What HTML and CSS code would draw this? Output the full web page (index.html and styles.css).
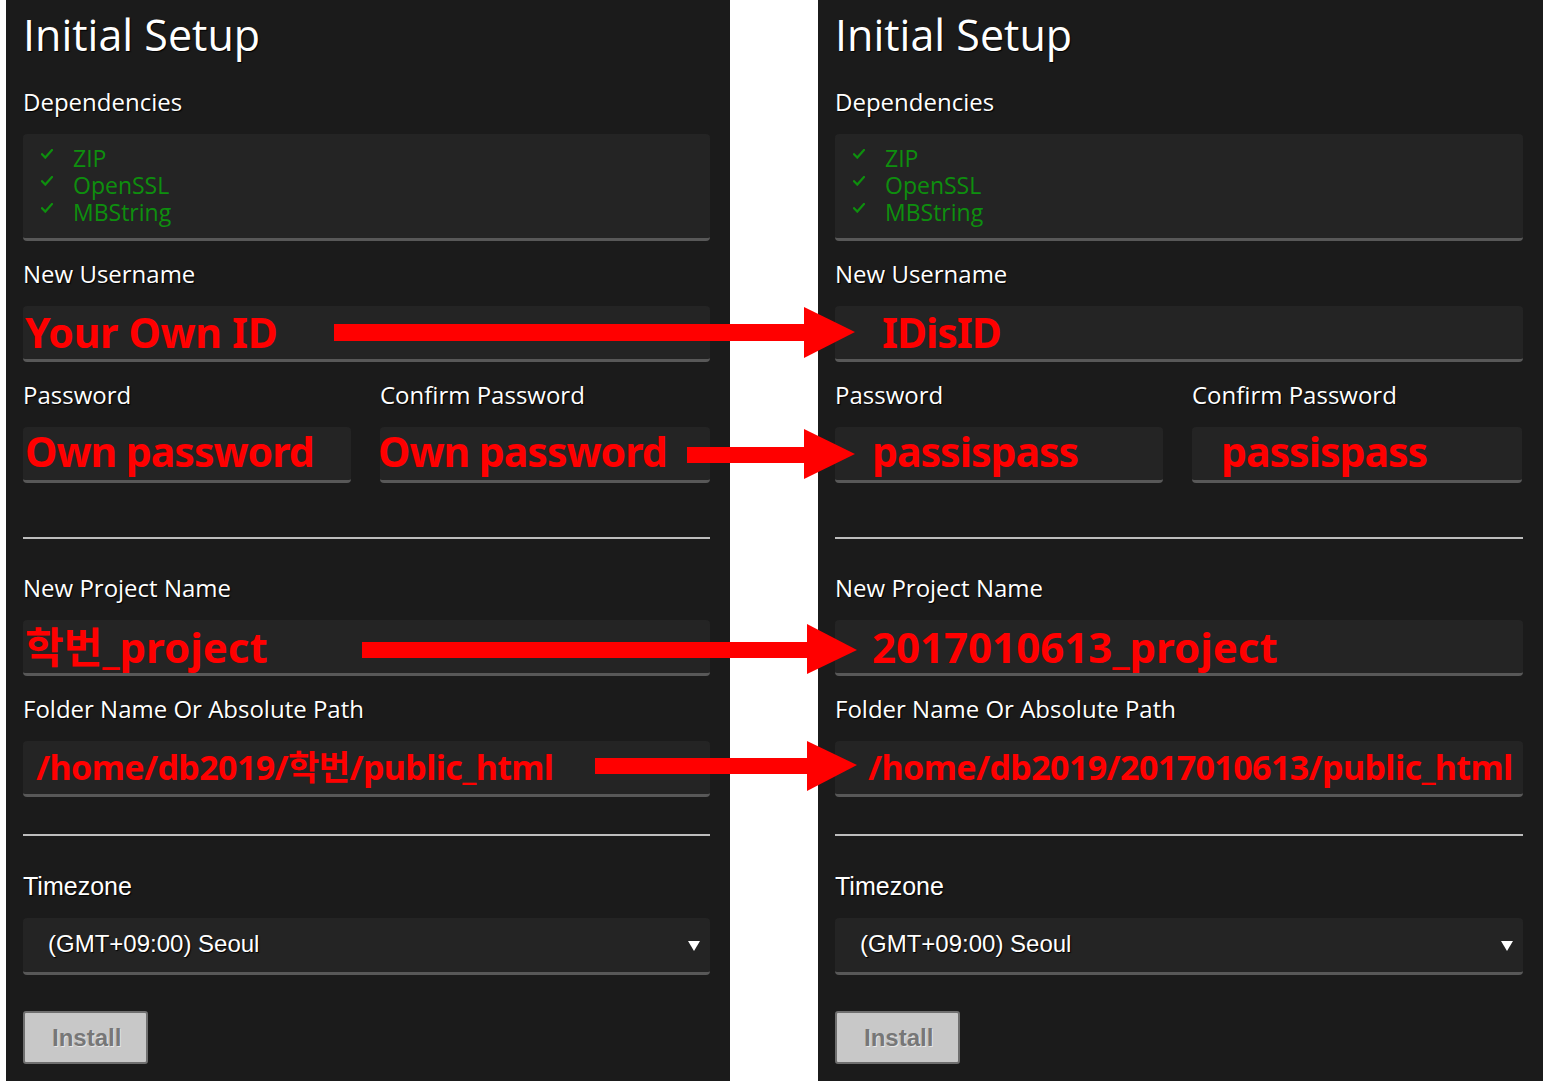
FILE: index.html
```html
<!DOCTYPE html>
<html lang="ko">
<head>
<meta charset="utf-8">
<title>Initial Setup</title>
<link rel="stylesheet" href="styles.css">
</head>
<body>
<div class="page">
  <section class="panel panel-left">
    <h1 class="title">Initial Setup</h1>
    <div class="label label-deps">Dependencies</div>
    <ul class="deps">
      <li><svg class="check" width="12" height="10" viewBox="0 0 12 10"><path d="M1 5.2 L4.3 8.6 L11 1" fill="none" stroke="#0e8f0e" stroke-width="2.2" stroke-linecap="square"/></svg><span class="dep">ZIP</span></li>
      <li><svg class="check" width="12" height="10" viewBox="0 0 12 10"><path d="M1 5.2 L4.3 8.6 L11 1" fill="none" stroke="#0e8f0e" stroke-width="2.2" stroke-linecap="square"/></svg><span class="dep">OpenSSL</span></li>
      <li><svg class="check" width="12" height="10" viewBox="0 0 12 10"><path d="M1 5.2 L4.3 8.6 L11 1" fill="none" stroke="#0e8f0e" stroke-width="2.2" stroke-linecap="square"/></svg><span class="dep">MBString</span></li>
    </ul>
    <div class="label label-gap">New Username</div>
    <div class="field"><span class="val tight-y pad-2">Your Own ID</span></div>
    <div class="pair">
      <div class="col">
        <div class="label label-gap">Password</div>
        <div class="field field-pw"><span class="val tight pad-2">Own password</span></div>
      </div>
      <div class="col">
        <div class="label label-gap">Confirm Password</div>
        <div class="field field-pw"><span class="val tight pad-neg">Own password</span></div>
      </div>
    </div>
    <div class="rule rule-a"></div>
    <div class="label label-after-rule">New Project Name</div>
    <div class="field"><span class="val big pad-2">학번_project</span></div>
    <div class="label label-gap">Folder Name Or Absolute Path</div>
    <div class="field"><span class="val path pad-13">/home/db2019/학번/public_html</span></div>
    <div class="rule rule-b"></div>
    <div class="label label-tz">Timezone</div>
    <div class="select"><span class="select-text">(GMT+09:00) Seoul</span><span class="caret"></span></div>
    <button class="btn" type="button">Install</button>
  </section>

  <section class="panel panel-right">
    <h1 class="title">Initial Setup</h1>
    <div class="label label-deps">Dependencies</div>
    <ul class="deps">
      <li><svg class="check" width="12" height="10" viewBox="0 0 12 10"><path d="M1 5.2 L4.3 8.6 L11 1" fill="none" stroke="#0e8f0e" stroke-width="2.2" stroke-linecap="square"/></svg><span class="dep">ZIP</span></li>
      <li><svg class="check" width="12" height="10" viewBox="0 0 12 10"><path d="M1 5.2 L4.3 8.6 L11 1" fill="none" stroke="#0e8f0e" stroke-width="2.2" stroke-linecap="square"/></svg><span class="dep">OpenSSL</span></li>
      <li><svg class="check" width="12" height="10" viewBox="0 0 12 10"><path d="M1 5.2 L4.3 8.6 L11 1" fill="none" stroke="#0e8f0e" stroke-width="2.2" stroke-linecap="square"/></svg><span class="dep">MBString</span></li>
    </ul>
    <div class="label label-gap">New Username</div>
    <div class="field"><span class="val tight pad-47">IDisID</span></div>
    <div class="pair">
      <div class="col">
        <div class="label label-gap">Password</div>
        <div class="field field-pw"><span class="val tight pad-37">passispass</span></div>
      </div>
      <div class="col">
        <div class="label label-gap">Confirm Password</div>
        <div class="field field-pw"><span class="val tight pad-29">passispass</span></div>
      </div>
    </div>
    <div class="rule rule-a"></div>
    <div class="label label-after-rule">New Project Name</div>
    <div class="field"><span class="val big pad-37">2017010613_project</span></div>
    <div class="label label-gap">Folder Name Or Absolute Path</div>
    <div class="field"><span class="val path pad-33">/home/db2019/2017010613/public_html</span></div>
    <div class="rule rule-b"></div>
    <div class="label label-tz">Timezone</div>
    <div class="select"><span class="select-text">(GMT+09:00) Seoul</span><span class="caret"></span></div>
    <button class="btn" type="button">Install</button>
  </section>
</div>

<svg class="arrows" width="1543" height="1081" viewBox="0 0 1543 1081" aria-hidden="true">
  <g fill="#ff0000">
    <rect x="334" y="324" width="472" height="17"/>
    <polygon points="804,307 855,332 804,358"/>
    <rect x="687" y="447" width="119" height="16"/>
    <polygon points="804,429 855,454 804,479"/>
    <rect x="362" y="642" width="447" height="16"/>
    <polygon points="807,624 857,650 807,674"/>
    <rect x="595" y="758" width="214" height="16"/>
    <polygon points="807,741 857,765 807,791"/>
  </g>
</svg>
</body>
</html>
```

FILE: styles.css
```css
html, body {
  margin: 0;
  padding: 0;
}

body {
  background: #ffffff;
  font-family: "Open Sans", "Noto Sans", sans-serif;
  position: relative;
  width: 1543px;
  height: 1081px;
  overflow: hidden;
}

.page {
  display: flex;
  gap: 88px;
  padding-left: 6px;
  height: 1081px;
}

.panel {
  box-sizing: border-box;
  background: #1b1b1b;
  padding: 0 20px 0 17px;
  display: flex;
  flex-direction: column;
  height: 1081px;
}

.panel-left { width: 724px; }
.panel-right { width: 725px; }

.title {
  margin: 0;
  height: 70px;
  line-height: 70px;
  font-size: 43px;
  font-weight: 500;
  color: #ffffff;
  text-shadow: 1px 1px 1px #000;
}

.label {
  height: 30px;
  line-height: 30px;
  font-size: 24px;
  font-weight: 500;
  color: #ffffff;
  text-shadow: 1px 1px 1px #000;
  margin-bottom: 17px;
  white-space: nowrap;
}

.label-deps { margin-top: 17px; }
.label-gap { margin-top: 18px; }
.label-after-rule { margin-top: 34px; }

.label-tz {
  margin-top: 35px;
  font-family: "Liberation Sans", Arial, sans-serif;
  font-size: 25px;
}

.deps {
  list-style: none;
  margin: 0;
  box-sizing: border-box;
  height: 107px;
  padding: 11px 0 0 18px;
  background: #242424;
  border-radius: 4px;
  border-bottom: 3px solid #585858;
}

.deps li {
  display: flex;
  align-items: flex-start;
  height: 27px;
  line-height: 27px;
  font-size: 23px;
  color: #0e8f0e;
}

.check {
  flex: none;
  margin-top: 4px;
  margin-right: 20px;
}

.field {
  box-sizing: border-box;
  height: 56px;
  background: #242424;
  border-radius: 4px;
  border-bottom: 3px solid #585858;
  display: flex;
  align-items: center;
  overflow: visible;
  white-space: nowrap;
}

.field-pw { padding-bottom: 4px; }

.val {
  color: #ff0000;
  font-family: "Noto Sans", "Noto Sans CJK KR", sans-serif;
  font-weight: 700;
  line-height: 53px;
}

.big { font-size: 42px; }
.tight { font-size: 41px; letter-spacing: -1px; }
.tight-y { font-size: 41px; letter-spacing: -0.3px; }
.path { font-size: 34px; letter-spacing: -0.6px; }

.pad-neg { margin-left: -2px; }
.pad-2 { padding-left: 2px; }
.pad-13 { padding-left: 13px; }
.pad-29 { padding-left: 29px; }
.pad-33 { padding-left: 33px; }
.pad-37 { padding-left: 37px; }
.pad-47 { padding-left: 47px; }

.pair {
  display: grid;
  grid-template-columns: 328px 330px;
  column-gap: 29px;
}

.rule {
  height: 2px;
  background: #bdbdbd;
}

.rule-a { margin-top: 54px; }
.rule-b { margin-top: 37px; }

.select {
  box-sizing: border-box;
  height: 57px;
  background: #242424;
  border-radius: 4px;
  border-bottom: 3px solid #585858;
  display: flex;
  align-items: center;
  padding: 0 10px 2px 25px;
  font-family: "Liberation Sans", Arial, sans-serif;
  font-size: 24px;
  color: #ffffff;
}

.select-text {
  flex: 1;
  text-shadow: 1px 1px 1px #000;
}

.caret {
  width: 0;
  height: 0;
  border-left: 6px solid transparent;
  border-right: 6px solid transparent;
  border-top: 10px solid #ffffff;
  margin-top: 4px;
}

.btn {
  align-self: flex-start;
  margin-top: 36px;
  box-sizing: border-box;
  width: 125px;
  height: 53px;
  padding: 0 0 0 27px;
  text-align: left;
  background: #c8c8c8;
  border: 2px solid #6f6f6f;
  border-radius: 3px;
  font-family: "Liberation Sans", Arial, sans-serif;
  font-weight: 700;
  font-size: 24px;
  color: #777777;
  text-shadow: 1px 1px 0 #e6e6e6;
}

.arrows {
  position: absolute;
  top: 0;
  left: 0;
  pointer-events: none;
}
```
